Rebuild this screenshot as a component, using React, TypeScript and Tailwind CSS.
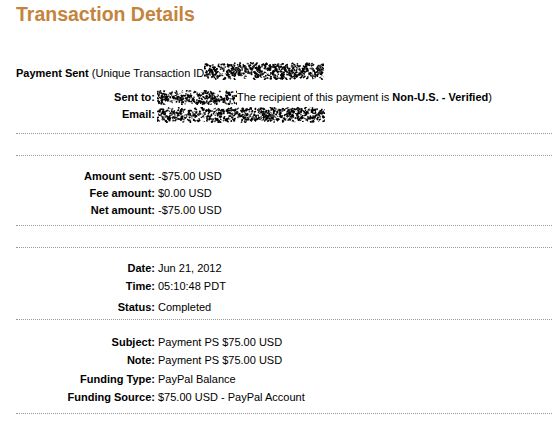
import React from "react";

function rng(seed: number) {
  let s = seed;
  return () => {
    s = (s * 1103515245 + 12345) & 0x7fffffff;
    return s / 0x7fffffff;
  };
}

function Scribble({ w, h, seed, className }: { w: number; h: number; seed: number; className?: string }) {
  const r = rng(seed);
  const segs: React.ReactNode[] = [];
  const n = Math.floor((w * h) / 3.5);
  for (let i = 0; i < n; i++) {
    const x = r() * w;
    const yc = h / 2 + (r() - 0.5) * h * 0.8;
    const dx = (r() - 0.5) * 5;
    const dy = (r() - 0.5) * 5;
    const g = r();
    segs.push(
      <line
        key={i}
        x1={x}
        y1={yc}
        x2={x + dx}
        y2={yc + dy}
        stroke={g < 0.78 ? "#000" : g < 0.88 ? "#444" : "#fff"}
        strokeWidth={1.6}
      />
    );
  }
  return (
    <svg width={w} height={h} viewBox={`0 0 ${w} ${h}`} className={className}>
      {segs}
    </svg>
  );
}

function Line({ className = "" }: { className?: string }) {
  return <div className={`ml-4 mr-2 border-t border-dotted border-[#9a9a9a] ${className}`} />;
}

function Row({ label, children, className = "h-[18px]" }: { label: string; children: React.ReactNode; className?: string }) {
  return (
    <div className={`flex items-center ${className}`}>
      <div className="w-[155px] shrink-0 text-right font-bold">{label}</div>
      <div className="pl-[3px] flex items-center">{children}</div>
    </div>
  );
}

export default function App() {
  return (
    <div className="w-[560px] h-[422px] bg-white text-[11px] text-black font-['Liberation_Sans',Arial,sans-serif] overflow-hidden">
      <h1 className="pl-4 h-[28px] leading-[28px] text-[19.5px] font-bold text-[#c4843c]">Transaction Details</h1>

      <div className="mt-[36px] pl-4 h-[18px] flex items-center">
        <span className="font-bold">Payment Sent</span>
        <span>&nbsp;(Unique Transaction ID</span>
        <Scribble w={120} h={18} seed={7} className="-mt-[4px]" />
      </div>

      <div className="mt-[7px]">
        <div className="flex h-[17px] items-center">
          <div className="w-[155px] shrink-0 text-right font-bold">Sent to:</div>
          <div className="pl-[2px] flex items-center">
            <Scribble w={80} h={15} seed={3} />
            <span>The recipient of this payment is </span>
            <span className="font-bold">&nbsp;Non-U.S. - Verified</span>
            <span>)</span>
          </div>
        </div>
        <div className="flex h-[17px] items-center">
          <div className="w-[155px] shrink-0 text-right font-bold">Email:</div>
          <div className="pl-[2px] flex items-center">
            <Scribble w={168} h={16} seed={11} />
          </div>
        </div>
      </div>

      <Line className="mt-[10px]" />
      <Line className="mt-[21px]" />

      <div className="mt-[12px]">
        <Row label="Amount sent:" className="h-[17px]">-$75.00 USD</Row>
        <Row label="Fee amount:" className="h-[17px]">$0.00 USD</Row>
        <Row label="Net amount:" className="h-[17px]">-$75.00 USD</Row>
      </div>

      <Line className="mt-[6px]" />
      <Line className="mt-[21px]" />

      <div className="mt-[11px]">
        <Row label="Date:">Jun 21, 2012</Row>
        <Row label="Time:">05:10:48 PDT</Row>
        <Row label="Status:" className="h-[18px] mt-[3px]">Completed</Row>
      </div>

      <Line className="mt-[3px]" />

      <div className="mt-[13px]">
        <Row label="Subject:">Payment PS $75.00 USD</Row>
        <Row label="Note:">Payment PS $75.00 USD</Row>
        <Row label="Funding Type:" className="h-[18px] mt-[1px]">PayPal Balance</Row>
        <Row label="Funding Source:">$75.00 USD - PayPal Account</Row>
      </div>

      <Line className="mt-[7px]" />
    </div>
  );
}
